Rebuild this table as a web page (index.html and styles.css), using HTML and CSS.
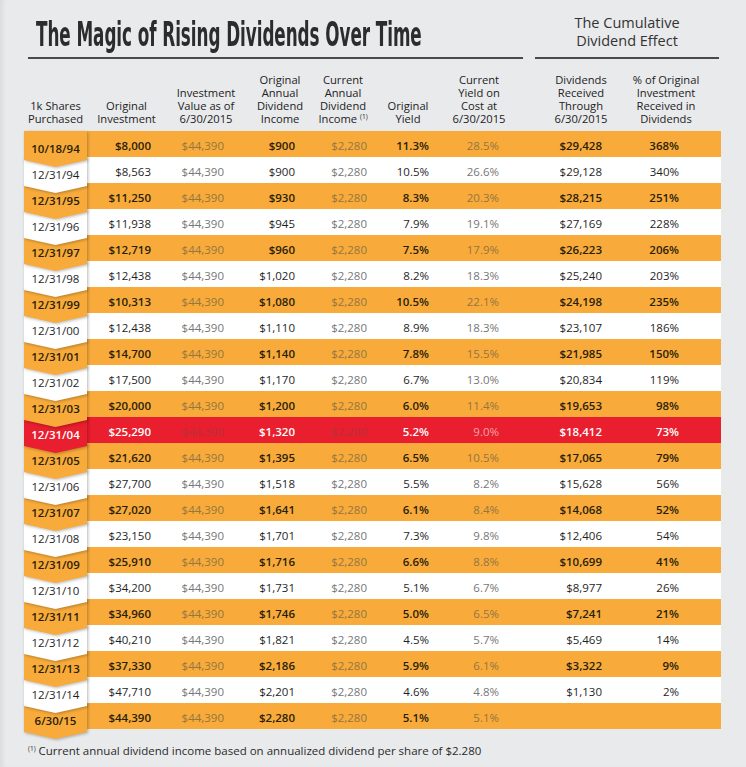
FILE: index.html
```html
<!DOCTYPE html>
<html lang="en">
<head>
<meta charset="utf-8">
<title>The Magic of Rising Dividends Over Time</title>
<link rel="stylesheet" href="styles.css">
</head>
<body>
<div class="page">
  <div class="top">
    <div class="title-block"><h1 class="title">The Magic of Rising Dividends Over Time</h1></div>
    <div class="cum-block"><div class="cum">The Cumulative<br>Dividend Effect</div></div>
  </div>

  <div class="head">
    <div class="h">1k Shares<br>Purchased</div>
    <div class="h">Original<br>Investment</div>
    <div class="h">Investment<br>Value as of<br>6/30/2015</div>
    <div class="h">Original<br>Annual<br>Dividend<br>Income</div>
    <div class="h">Current<br>Annual<br>Dividend<br>Income <sup>(1)</sup></div>
    <div class="h">Original<br>Yield</div>
    <div class="h">Current<br>Yield on<br>Cost at<br>6/30/2015</div>
    <div class="h h8">Dividends<br>Received<br>Through<br>6/30/2015</div>
    <div class="h h9">% of Original<br>Investment<br>Received in<br>Dividends</div>
  </div>

  <div class="rows">
    <div class="row o"><div class="date"><span class="chev"></span><span class="dt">10/18/94</span></div><div class="v c2">$8,000</div><div class="v c3 g">$44,390</div><div class="v c4">$900</div><div class="v c5 g">$2,280</div><div class="v c6">11.3%</div><div class="v c7 g">28.5%</div><div class="v c8">$29,428</div><div class="v c9">368%</div></div>
    <div class="row w"><div class="date"><span class="chev"></span><span class="dt">12/31/94</span></div><div class="v c2">$8,563</div><div class="v c3 g">$44,390</div><div class="v c4">$900</div><div class="v c5 g">$2,280</div><div class="v c6">10.5%</div><div class="v c7 g">26.6%</div><div class="v c8">$29,128</div><div class="v c9">340%</div></div>
    <div class="row o"><div class="date"><span class="chev"></span><span class="dt">12/31/95</span></div><div class="v c2">$11,250</div><div class="v c3 g">$44,390</div><div class="v c4">$930</div><div class="v c5 g">$2,280</div><div class="v c6">8.3%</div><div class="v c7 g">20.3%</div><div class="v c8">$28,215</div><div class="v c9">251%</div></div>
    <div class="row w"><div class="date"><span class="chev"></span><span class="dt">12/31/96</span></div><div class="v c2">$11,938</div><div class="v c3 g">$44,390</div><div class="v c4">$945</div><div class="v c5 g">$2,280</div><div class="v c6">7.9%</div><div class="v c7 g">19.1%</div><div class="v c8">$27,169</div><div class="v c9">228%</div></div>
    <div class="row o"><div class="date"><span class="chev"></span><span class="dt">12/31/97</span></div><div class="v c2">$12,719</div><div class="v c3 g">$44,390</div><div class="v c4">$960</div><div class="v c5 g">$2,280</div><div class="v c6">7.5%</div><div class="v c7 g">17.9%</div><div class="v c8">$26,223</div><div class="v c9">206%</div></div>
    <div class="row w"><div class="date"><span class="chev"></span><span class="dt">12/31/98</span></div><div class="v c2">$12,438</div><div class="v c3 g">$44,390</div><div class="v c4">$1,020</div><div class="v c5 g">$2,280</div><div class="v c6">8.2%</div><div class="v c7 g">18.3%</div><div class="v c8">$25,240</div><div class="v c9">203%</div></div>
    <div class="row o"><div class="date"><span class="chev"></span><span class="dt">12/31/99</span></div><div class="v c2">$10,313</div><div class="v c3 g">$44,390</div><div class="v c4">$1,080</div><div class="v c5 g">$2,280</div><div class="v c6">10.5%</div><div class="v c7 g">22.1%</div><div class="v c8">$24,198</div><div class="v c9">235%</div></div>
    <div class="row w"><div class="date"><span class="chev"></span><span class="dt">12/31/00</span></div><div class="v c2">$12,438</div><div class="v c3 g">$44,390</div><div class="v c4">$1,110</div><div class="v c5 g">$2,280</div><div class="v c6">8.9%</div><div class="v c7 g">18.3%</div><div class="v c8">$23,107</div><div class="v c9">186%</div></div>
    <div class="row o"><div class="date"><span class="chev"></span><span class="dt">12/31/01</span></div><div class="v c2">$14,700</div><div class="v c3 g">$44,390</div><div class="v c4">$1,140</div><div class="v c5 g">$2,280</div><div class="v c6">7.8%</div><div class="v c7 g">15.5%</div><div class="v c8">$21,985</div><div class="v c9">150%</div></div>
    <div class="row w"><div class="date"><span class="chev"></span><span class="dt">12/31/02</span></div><div class="v c2">$17,500</div><div class="v c3 g">$44,390</div><div class="v c4">$1,170</div><div class="v c5 g">$2,280</div><div class="v c6">6.7%</div><div class="v c7 g">13.0%</div><div class="v c8">$20,834</div><div class="v c9">119%</div></div>
    <div class="row o"><div class="date"><span class="chev"></span><span class="dt">12/31/03</span></div><div class="v c2">$20,000</div><div class="v c3 g">$44,390</div><div class="v c4">$1,200</div><div class="v c5 g">$2,280</div><div class="v c6">6.0%</div><div class="v c7 g">11.4%</div><div class="v c8">$19,653</div><div class="v c9">98%</div></div>
    <div class="row r"><div class="date"><span class="chev"></span><span class="dt">12/31/04</span></div><div class="v c2">$25,290</div><div class="v c3 g">$44,390</div><div class="v c4">$1,320</div><div class="v c5 g">$2,280</div><div class="v c6">5.2%</div><div class="v c7 g">9.0%</div><div class="v c8">$18,412</div><div class="v c9">73%</div></div>
    <div class="row o"><div class="date"><span class="chev"></span><span class="dt">12/31/05</span></div><div class="v c2">$21,620</div><div class="v c3 g">$44,390</div><div class="v c4">$1,395</div><div class="v c5 g">$2,280</div><div class="v c6">6.5%</div><div class="v c7 g">10.5%</div><div class="v c8">$17,065</div><div class="v c9">79%</div></div>
    <div class="row w"><div class="date"><span class="chev"></span><span class="dt">12/31/06</span></div><div class="v c2">$27,700</div><div class="v c3 g">$44,390</div><div class="v c4">$1,518</div><div class="v c5 g">$2,280</div><div class="v c6">5.5%</div><div class="v c7 g">8.2%</div><div class="v c8">$15,628</div><div class="v c9">56%</div></div>
    <div class="row o"><div class="date"><span class="chev"></span><span class="dt">12/31/07</span></div><div class="v c2">$27,020</div><div class="v c3 g">$44,390</div><div class="v c4">$1,641</div><div class="v c5 g">$2,280</div><div class="v c6">6.1%</div><div class="v c7 g">8.4%</div><div class="v c8">$14,068</div><div class="v c9">52%</div></div>
    <div class="row w"><div class="date"><span class="chev"></span><span class="dt">12/31/08</span></div><div class="v c2">$23,150</div><div class="v c3 g">$44,390</div><div class="v c4">$1,701</div><div class="v c5 g">$2,280</div><div class="v c6">7.3%</div><div class="v c7 g">9.8%</div><div class="v c8">$12,406</div><div class="v c9">54%</div></div>
    <div class="row o"><div class="date"><span class="chev"></span><span class="dt">12/31/09</span></div><div class="v c2">$25,910</div><div class="v c3 g">$44,390</div><div class="v c4">$1,716</div><div class="v c5 g">$2,280</div><div class="v c6">6.6%</div><div class="v c7 g">8.8%</div><div class="v c8">$10,699</div><div class="v c9">41%</div></div>
    <div class="row w"><div class="date"><span class="chev"></span><span class="dt">12/31/10</span></div><div class="v c2">$34,200</div><div class="v c3 g">$44,390</div><div class="v c4">$1,731</div><div class="v c5 g">$2,280</div><div class="v c6">5.1%</div><div class="v c7 g">6.7%</div><div class="v c8">$8,977</div><div class="v c9">26%</div></div>
    <div class="row o"><div class="date"><span class="chev"></span><span class="dt">12/31/11</span></div><div class="v c2">$34,960</div><div class="v c3 g">$44,390</div><div class="v c4">$1,746</div><div class="v c5 g">$2,280</div><div class="v c6">5.0%</div><div class="v c7 g">6.5%</div><div class="v c8">$7,241</div><div class="v c9">21%</div></div>
    <div class="row w"><div class="date"><span class="chev"></span><span class="dt">12/31/12</span></div><div class="v c2">$40,210</div><div class="v c3 g">$44,390</div><div class="v c4">$1,821</div><div class="v c5 g">$2,280</div><div class="v c6">4.5%</div><div class="v c7 g">5.7%</div><div class="v c8">$5,469</div><div class="v c9">14%</div></div>
    <div class="row o"><div class="date"><span class="chev"></span><span class="dt">12/31/13</span></div><div class="v c2">$37,330</div><div class="v c3 g">$44,390</div><div class="v c4">$2,186</div><div class="v c5 g">$2,280</div><div class="v c6">5.9%</div><div class="v c7 g">6.1%</div><div class="v c8">$3,322</div><div class="v c9">9%</div></div>
    <div class="row w"><div class="date"><span class="chev"></span><span class="dt">12/31/14</span></div><div class="v c2">$47,710</div><div class="v c3 g">$44,390</div><div class="v c4">$2,201</div><div class="v c5 g">$2,280</div><div class="v c6">4.6%</div><div class="v c7 g">4.8%</div><div class="v c8">$1,130</div><div class="v c9">2%</div></div>
    <div class="row o"><div class="date"><span class="chev"></span><span class="dt">6/30/15</span></div><div class="v c2">$44,390</div><div class="v c3 g">$44,390</div><div class="v c4">$2,280</div><div class="v c5 g">$2,280</div><div class="v c6">5.1%</div><div class="v c7 g">5.1%</div><div class="v c8"></div><div class="v c9"></div></div>
  </div>

  <p class="note"><sup>(1)</sup> Current annual dividend income based on annualized dividend per share of $2.280</p>
</div>
</body>
</html>
```
FILE: styles.css
```css
html, body {
  margin: 0;
  padding: 0;
}
body {
  background: #e9eaec;
  font-family: "Open Sans", "Noto Sans", sans-serif;
  color: #222;
  width: 746px;
  height: 767px;
  overflow: hidden;
  box-shadow: inset 5px 0 4px -2px rgba(0,0,0,0.06);
}
.page {
  padding-left: 24px;
  width: 697px;
}

/* ---------- top titles ---------- */
.top {
  display: flex;
  margin-left: 4px;
}
.title-block {
  width: 495px;
  height: 59px;
  box-sizing: border-box;
  padding: 18px 0 0 8px;
  border-bottom: 2px solid #4a4a4a;
}
.title {
  margin: 0;
  display: inline-block;
  white-space: nowrap;
  font-family: "DejaVu Sans Condensed", "DejaVu Sans", sans-serif;
  font-weight: bold;
  font-size: 33px;
  line-height: 33px;
  letter-spacing: -0.1px;
  color: #2c2c2c;
  transform: scaleX(0.566);
  transform-origin: 0 0;
}
.cum-block {
  margin-left: 12px;
  width: 184px;
  height: 59px;
  box-sizing: border-box;
  padding-top: 14px;
  border-bottom: 2px solid #4a4a4a;
  text-align: center;
}
.cum {
  font-size: 14.5px;
  line-height: 18px;
  color: #333;
}

/* ---------- column header ---------- */
.head,
.row {
  display: grid;
  grid-template-columns: 63px 79px 80px 68px 58px 72px 70px 118px 89px;
}
.head {
  height: 72px;
  box-sizing: border-box;
  padding-bottom: 6px;
  align-items: end;
}
.h {
  text-align: center;
  font-size: 11.2px;
  line-height: 13px;
  color: #222;
  white-space: nowrap;
}
.h sup {
  font-size: 6.5px;
  vertical-align: 4px;
  line-height: 0;
}
.h8 { padding-left: 16px; }
.h9 { padding-right: 21px; }

/* ---------- rows ---------- */
.row {
  height: 26px;
  font-size: 11.5px;
}
.row.o { background: #f8ab3b; color: #2a1e0a; font-weight: 600; }
.row.w { background: #ffffff; color: #1f1f1f; font-weight: 400; }
.row.r { background: #e91e2e; color: #ffffff; font-weight: 600; }

.v {
  text-align: right;
  padding-top: 4px;
  line-height: 22px;
  white-space: nowrap;
}
.c2 { padding-right: 15px; }
.c3 { padding-right: 22px; }
.c4 { padding-right: 19px; }
.c5 { padding-right: 5px; }
.c6 { padding-right: 15px; }
.c7 { padding-right: 15px; }
.c8 { padding-right: 30px; }
.c9 { padding-right: 42px; }

.row.o .g { color: #957540; font-weight: 400; }
.row.w .g { color: #777777; }
.row.r .g { color: #b9303c; font-weight: 400; }
.row.r .c7 { color: #f6a3aa; }

/* ---------- date chevrons ---------- */
.date {
  position: relative;
  text-align: center;
}
.chev {
  position: absolute;
  left: 0;
  right: 0;
  top: 0;
  bottom: -7px;
  filter: drop-shadow(1.5px 1.5px 1.5px rgba(0,0,0,0.28));
}
.chev::before {
  content: "";
  position: absolute;
  inset: 0;
  clip-path: polygon(0 0, 50% 7px, 100% 0, 100% calc(100% - 7px), 50% 100%, 0 calc(100% - 7px));
}
.row:first-child .chev::before {
  clip-path: polygon(0 0, 100% 0, 100% calc(100% - 7px), 50% 100%, 0 calc(100% - 7px));
}
.row.o .chev::before { background: #f8ab3b; }
.row.w .chev::before { background: #ffffff; }
.row.r .chev::before { background: #e91e2e; }

.dt {
  position: relative;
  z-index: 40;
  display: block;
  padding-top: 7px;
  line-height: 22px;
}

.row:nth-child(1) .chev { z-index: 30; }
.row:nth-child(2) .chev { z-index: 29; }
.row:nth-child(3) .chev { z-index: 28; }
.row:nth-child(4) .chev { z-index: 27; }
.row:nth-child(5) .chev { z-index: 26; }
.row:nth-child(6) .chev { z-index: 25; }
.row:nth-child(7) .chev { z-index: 24; }
.row:nth-child(8) .chev { z-index: 23; }
.row:nth-child(9) .chev { z-index: 22; }
.row:nth-child(10) .chev { z-index: 21; }
.row:nth-child(11) .chev { z-index: 20; }
.row:nth-child(12) .chev { z-index: 19; }
.row:nth-child(13) .chev { z-index: 18; }
.row:nth-child(14) .chev { z-index: 17; }
.row:nth-child(15) .chev { z-index: 16; }
.row:nth-child(16) .chev { z-index: 15; }
.row:nth-child(17) .chev { z-index: 14; }
.row:nth-child(18) .chev { z-index: 13; }
.row:nth-child(19) .chev { z-index: 12; }
.row:nth-child(20) .chev { z-index: 11; }
.row:nth-child(21) .chev { z-index: 10; }
.row:nth-child(22) .chev { z-index: 9; }
.row:nth-child(23) .chev { z-index: 8; }

/* ---------- footnote ---------- */
.note {
  margin: 15px 0 0 4px;
  font-size: 11.5px;
  line-height: 13px;
  color: #2a2a2a;
}
.note sup {
  font-size: 6.5px;
  vertical-align: 4px;
  line-height: 0;
}
```
